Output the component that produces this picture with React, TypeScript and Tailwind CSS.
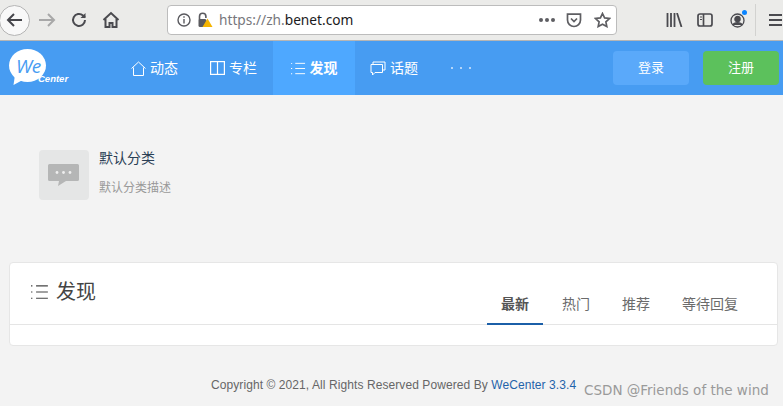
import React from "react";

const CJK = "font-['Liberation_Sans','Noto_Sans_CJK_SC',sans-serif]";

function BackIcon() {
  return (
    <svg width="20" height="20" viewBox="0 0 20 20" fill="none" stroke="#45454a" strokeWidth="2">
      <path d="M17 10H3M9 4l-6 6 6 6" />
    </svg>
  );
}

function ListIcon({ color, size = 16 }: { color: string; size?: number }) {
  return (
    <svg width={size} height={size} viewBox="0 0 16 16" fill="none" stroke={color} strokeWidth="1">
      <path d="M4.5 2.5H15M4.5 8H15M4.5 13.5H15" />
      <path d="M0.5 2v1M0.5 7.5v1M0.5 13v1" strokeWidth="1.5" />
    </svg>
  );
}

function NavItem({ icon, label, active }: { icon: React.ReactNode; label: string; active?: boolean }) {
  return (
    <div className={`flex h-full items-center gap-[4px] ${active ? "w-[82px] justify-center bg-[#4ea8ff] font-bold" : ""}`}>
      {icon}
      <span className="text-[14px] leading-none text-white">{label}</span>
    </div>
  );
}

export default function App() {
  return (
    <div className={`relative flex h-[406px] w-[783px] flex-col overflow-hidden bg-[#f3f3f3] ${CJK}`}>
      {/* Browser toolbar */}
      <div className="flex h-[41px] shrink-0 items-center border-b border-b-[#b5b5b5] bg-[#ebebe9]">
        <div className="ml-[-1px] flex h-[31px] w-[31px] items-center justify-center rounded-full border border-[#b4b4b4] bg-[#f8f8f8]">
          <BackIcon />
        </div>
        <div className="ml-[7px]">
          <svg width="20" height="20" viewBox="0 0 20 20" fill="none" stroke="#a8a8a8" strokeWidth="2">
            <path d="M2 10h15M11 4l6 6-6 6" />
          </svg>
        </div>
        <div className="ml-[13px]">
          <svg width="18" height="18" viewBox="0 0 18 18" fill="none" stroke="#4a4a4f" strokeWidth="2">
            <path d="M15 9a6 6 0 1 1-2-4.5L15 6.5" />
            <path d="M15.5 2v5h-5" fill="#4a4a4f" stroke="none" />
          </svg>
        </div>
        <div className="ml-[14px]">
          <svg width="18" height="18" viewBox="0 0 18 18" fill="none" stroke="#4a4a4f" strokeWidth="2">
            <path d="M1.5 9L9 2l7.5 7" />
            <path d="M3.5 8v8h4v-4h3v4h4V8" />
          </svg>
        </div>
        <div className="ml-[47px] flex h-[30px] w-[450px] items-center rounded-[4px] border border-[#bcbcbc] bg-white">
          <div className="ml-[9px]">
            <svg width="14" height="14" viewBox="0 0 14 14" fill="none" stroke="#5a5a5f" strokeWidth="1.4">
              <circle cx="7" cy="7" r="6" />
              <path d="M7 6v4.5M7 3.2v1.6" />
            </svg>
          </div>
          <div className="ml-[7px]">
            <svg width="15" height="16" viewBox="0 0 15 16">
              <path d="M1.5 8V4.5a3.2 3.2 0 0 1 6.4 0V6" fill="none" stroke="#5a5a5f" strokeWidth="1.6" />
              <rect x="0.5" y="7" width="8" height="8" rx="1.5" fill="#5a5a5f" />
              <path d="M9.5 6.5l5 8.5h-10z" fill="#f5b400" />
            </svg>
          </div>
          <span className="ml-[6px] font-['Noto_Sans',sans-serif] text-[13.7px] leading-none text-[#77777c]">
            https://zh.<span className="text-[#1a1a1c]">benet.com</span>
          </span>
          <div className="ml-auto flex items-center">
            <div className="flex gap-[2px]">
              <span className="h-[4px] w-[4px] rounded-full bg-[#5e5e62]" />
              <span className="h-[4px] w-[4px] rounded-full bg-[#5e5e62]" />
              <span className="h-[4px] w-[4px] rounded-full bg-[#5e5e62]" />
            </div>
            <div className="ml-[11px]">
              <svg width="16" height="15" viewBox="0 0 16 15" fill="none" stroke="#5e5e62" strokeWidth="1.7">
                <path d="M1.5 1.2h13v5.8a6.5 6.5 0 0 1-13 0z" />
                <path d="M5 5.5l3 3 3-3" />
              </svg>
            </div>
            <div className="ml-[12px] mr-[5px]">
              <svg width="17" height="16" viewBox="0 0 17 16" fill="none" stroke="#5e5e62" strokeWidth="1.7">
                <path d="M8.5 1.5l2.1 4.4 4.8.6-3.5 3.3.9 4.7-4.3-2.3-4.3 2.3.9-4.7-3.5-3.3 4.8-.6z" />
              </svg>
            </div>
          </div>
        </div>
        <div className="ml-[49px]">
          <svg width="17" height="14" viewBox="0 0 16 14" fill="none" stroke="#4a4a4f" strokeWidth="1.8">
            <path d="M1 0v14M4.5 0v14M8 0v14M10.5 0l4.5 14" />
          </svg>
        </div>
        <div className="ml-[14px]">
          <svg width="16" height="14" viewBox="0 0 16 14" fill="none" stroke="#4a4a4f" strokeWidth="1.7">
            <rect x="1" y="1" width="14" height="12" rx="2" />
            <path d="M6.5 1v12" />
            <path d="M3 4h2M3 6.5h2" strokeWidth="1" />
          </svg>
        </div>
        <div className="relative ml-[17px]">
          <svg width="15" height="15" viewBox="0 0 15 15" fill="none" stroke="#4a4a4f" strokeWidth="1.3">
            <circle cx="7.5" cy="7.5" r="6.5" />
            <circle cx="7.5" cy="6" r="2.6" fill="#4a4a4f" />
            <path d="M3 12c1-3 8-3 9 0" fill="#4a4a4f" />
          </svg>
          <span className="absolute right-[-2px] top-[-3px] h-[5px] w-[5px] rounded-full bg-[#0a84ff]" />
        </div>
        <div className="ml-[10px] h-[32px] w-px bg-[#d2d2d0]" />
        <div className="ml-[13px] flex shrink-0 flex-col gap-[3px]">
          <span className="h-[2px] w-[13px] bg-[#4a4a4f]" />
          <span className="h-[2px] w-[13px] bg-[#4a4a4f]" />
          <span className="h-[2px] w-[13px] bg-[#4a4a4f]" />
        </div>
      </div>

      {/* Site header */}
      <div className="flex h-[54px] shrink-0 items-center bg-[#479cf2]">
        <div className="relative ml-[9px] mt-[8px] h-[40px] w-[62px] shrink-0 self-start">
          <svg width="38" height="38" viewBox="0 0 38 38" className="absolute left-0 top-0">
            <ellipse cx="18.5" cy="16.5" rx="18.5" ry="16.5" fill="#fff" />
            <path d="M6 26l-1.5 10 11-6z" fill="#fff" />
          </svg>
          <span className="absolute left-[7px] top-[6px] font-['Open_Sans',sans-serif] text-[19px] italic leading-[22px] tracking-[-0.5px] text-[#479cf2]">
            We
          </span>
          <span className="absolute left-[29px] top-[24px] font-['Liberation_Sans',sans-serif] text-[9.5px] font-bold italic leading-[12px] text-white">
            Center
          </span>
        </div>
        <div className="ml-[60px] flex h-full items-center">
          <NavItem
            label="动态"
            icon={
              <svg width="15" height="15" viewBox="0 0 15 15" fill="none" stroke="#fff" strokeWidth="1">
                <path d="M0.5 7.5L7.5 1l7 6.5" />
                <path d="M2.5 6.5v8h10v-8" />
              </svg>
            }
          />
          <div className="w-[32px]" />
          <NavItem
            label="专栏"
            icon={
              <svg width="15" height="14" viewBox="0 0 15 14" fill="none" stroke="#fff" strokeWidth="1.2">
                <rect x="0.6" y="0.6" width="13.8" height="12.8" />
                <path d="M7.5 0.6v12.8" />
              </svg>
            }
          />
          <div className="w-[16px]" />
          <NavItem label="发现" active icon={<ListIcon color="#fff" size={15} />} />
          <div className="w-[15px]" />
          <NavItem
            label="话题"
            icon={
              <svg width="16" height="15" viewBox="0 0 16 15" fill="none" stroke="#fff" strokeWidth="1">
                <path d="M3 3V1h12v8h-2" />
                <path d="M1 3.5h11.5v8H5l-2.5 2.5v-2.5H1z" />
              </svg>
            }
          />
          <div className="ml-[33px] flex gap-[7px]">
            <span className="h-[2px] w-[2px] rounded-full bg-[#d7e9fc]" />
            <span className="h-[2px] w-[2px] rounded-full bg-[#d7e9fc]" />
            <span className="h-[2px] w-[2px] rounded-full bg-[#d7e9fc]" />
          </div>
        </div>
        <div className="ml-auto mr-[4px] flex items-center gap-[14px]">
          <div className="flex h-[34px] w-[76px] items-center justify-center rounded-[4px] bg-[#5aa9fa] text-[13px] text-white">
            登录
          </div>
          <div className="flex h-[34px] w-[76px] items-center justify-center rounded-[4px] bg-[#5cc15c] text-[13px] text-white">
            注册
          </div>
        </div>
      </div>

      {/* Category */}
      <div className="ml-[39px] mt-[55px] flex shrink-0 items-start">
        <div className="flex h-[50px] w-[50px] items-center justify-center rounded-[4px] bg-[#e5e6e6]">
          <svg width="31" height="22" viewBox="0 0 31 22" className="mr-[1px]">
            <path d="M1.5 0h28A1.5 1.5 0 0 1 31 1.5v14a1.5 1.5 0 0 1-1.5 1.5H18l-8 5 1-5H1.5A1.5 1.5 0 0 1 0 15.5v-14A1.5 1.5 0 0 1 1.5 0z" fill="#b5b6b6" />
            <circle cx="9" cy="8.5" r="1.4" fill="#eee" />
            <circle cx="15.5" cy="8.5" r="1.4" fill="#eee" />
            <circle cx="22" cy="8.5" r="1.4" fill="#eee" />
          </svg>
        </div>
        <div className="ml-[10px] flex flex-col">
          <span className="mt-[1px] text-[14px] leading-[15px] text-[#2a3f55]">默认分类</span>
          <span className="mt-[15px] text-[12px] leading-[14px] text-[#999999]">默认分类描述</span>
        </div>
      </div>

      {/* Discover panel */}
      <div className="ml-[9px] mt-[62px] flex h-[84px] w-[769px] shrink-0 flex-col rounded-[4px] border border-[#e6e6e6] bg-white">
        <div className="flex h-[62px] items-stretch border-b border-b-[#e5e5e5]">
          <div className="ml-[21px] mt-[19px] flex h-[20px] items-center gap-[7px]">
            <ListIcon color="#444444" size={18} />
            <span className="text-[20px] leading-none text-[#444444]">发现</span>
          </div>
          <div className="ml-auto mr-[39px] flex items-end text-[14px]">
            <div className="mb-[-1px] flex h-[40px] w-[56px] items-center justify-center border-b-[2px] border-b-[#1b5fa8] font-bold text-[#555555]">
              最新
            </div>
            <div className="flex h-[40px] items-center pl-[19px] text-[#6b6b6b]">热门</div>
            <div className="flex h-[40px] items-center pl-[32px] text-[#6b6b6b]">推荐</div>
            <div className="flex h-[40px] items-center pl-[32px] text-[#6b6b6b]">等待回复</div>
          </div>
        </div>
      </div>

      {/* Footer */}
      <div className="ml-[211px] mt-[32px] shrink-0 text-[12px] leading-[14px] tracking-[0.08px] text-[#666666]">
        Copyright © 2021, All Rights Reserved Powered By <span className="text-[#1f63aa]">WeCenter 3.3.4</span>
      </div>

      {/* Watermark */}
      <span className="absolute left-[584px] top-[381px] font-['DejaVu_Sans',sans-serif] text-[13.5px] leading-[18px] text-[#9a9a9a]">
        CSDN @Friends of the wind
      </span>
    </div>
  );
}
